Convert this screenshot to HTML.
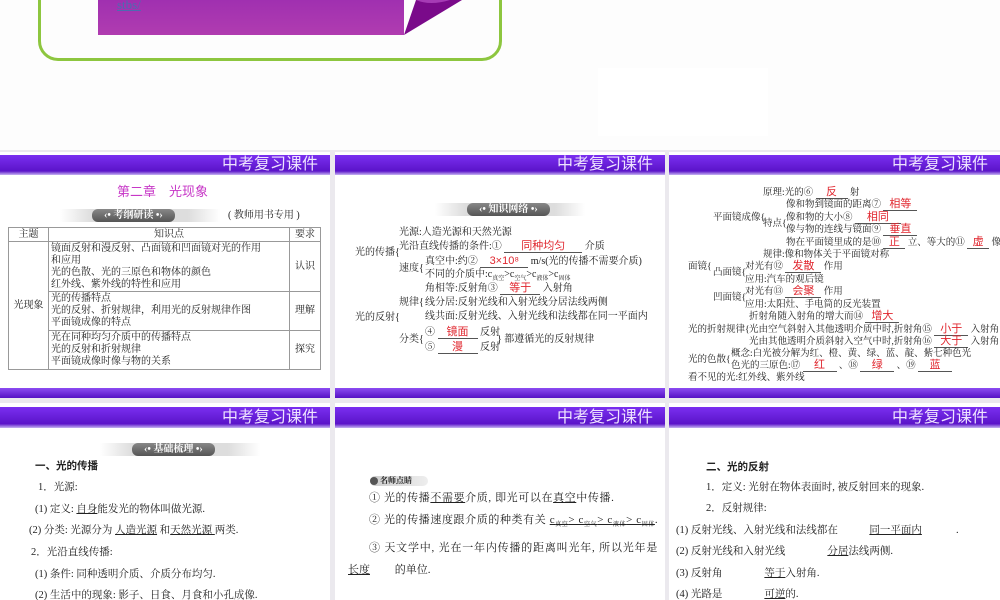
<!DOCTYPE html>
<html><head><meta charset="utf-8"><style>
*{margin:0;padding:0;box-sizing:border-box}
body{width:1000px;height:600px;overflow:hidden;background:#fdfdfd;position:relative;font-family:"Liberation Serif","Noto Serif CJK SC",serif;color:#222}
.a{position:absolute;white-space:nowrap}
.grid{position:absolute;left:0;top:150px;width:1000px;height:450px;background:#ebe9ee}
.tile{position:absolute;background:#fff;overflow:hidden}
.hd{position:absolute;left:0;right:0;top:3px;height:20px;background:linear-gradient(#7a2ff0,#5b14c9 80%,#c7b4f2);color:#efe4ff;font-family:"Liberation Sans","Noto Sans CJK SC",sans-serif;font-size:16px;text-align:right;padding-right:12px;line-height:20px}
.ft{position:absolute;left:0;right:0;bottom:0;height:10px;background:linear-gradient(#8c4cf2,#5512c4)}
.t{font-size:10px;line-height:12px}
.s{font-size:9.5px;line-height:12px}
.r{color:#e0262e;font-family:"Liberation Sans","Noto Sans CJK SC",sans-serif;font-size:11px}
.u{text-decoration:underline}
.ul{display:inline-block;border-bottom:1px solid #555;text-align:center;line-height:11px}
.lab{position:absolute;height:13px;background:linear-gradient(90deg,transparent,#ddd 20%,#ddd 80%,transparent)}
.pill{position:absolute;top:0;height:13px;background:linear-gradient(#888,#555);color:#fff;font-size:10px;line-height:13px;border-radius:6px;padding:0 12px;font-weight:bold}
table{border-collapse:collapse;font-size:10px;line-height:12px}
td{border:1px solid #999;vertical-align:middle;padding:0 2px}
</style></head><body>
<div class="a" style="left:38px;top:-20px;width:464px;height:81px;border:3px solid #8dc63f;border-radius:20px"></div>
<div class="a" style="left:98px;top:0;width:306px;height:35px;background:linear-gradient(#a030b0,#b03cb0)"></div>
<svg class="a" style="left:400px;top:0" width="65" height="36"><polygon points="4,35 16,0 62,0" fill="#7a0a8a"/><path d="M16,0 Q30,6 50,0Z" fill="#a63bb5"/></svg>
<div class="a" style="left:117px;top:-2px;font-size:13px;line-height:14px;color:#4d6bb0;text-decoration:underline">stbs/</div>
<div class="a" style="left:598px;top:68px;width:170px;height:68px;background:#fff"></div>

<div class="grid"></div>
<!-- tile 1 -->
<div class="tile" style="left:0;top:152px;width:330px;height:246px">
<div class="hd">中考复习课件</div><div class="ft"></div>
<div class="a" style="left:117px;top:29px;font-size:13px;color:#c737c7;font-family:'Liberation Sans','Noto Sans CJK SC',sans-serif">第二章　光现象</div>
<div class="lab" style="left:60px;top:57px;width:160px"><div class="pill" style="left:32px">‹• 考纲研读 •›</div></div>
<div class="a t" style="left:228px;top:58px">( 教师用书专用 )</div>
<table class="a" style="left:8px;top:75px;width:313px">
<tr style="height:14px"><td style="width:40px;text-align:center">主题</td><td style="text-align:center">知识点</td><td style="width:31px;text-align:center">要求</td></tr>
<tr style="height:50px"><td rowspan="3" style="text-align:center">光现象</td><td>镜面反射和漫反射、凸面镜和凹面镜对光的作用<br>和应用<br>光的色散、光的三原色和物体的颜色<br>红外线、紫外线的特性和应用</td><td style="text-align:center">认识</td></tr>
<tr style="height:39px"><td>光的传播特点<br>光的反射、折射规律，利用光的反射规律作图<br>平面镜成像的特点</td><td style="text-align:center">理解</td></tr>
<tr style="height:39px"><td>光在同种均匀介质中的传播特点<br>光的反射和折射规律<br>平面镜成像时像与物的关系</td><td style="text-align:center">探究</td></tr>
</table>
</div>
<!-- tile 2 -->
<div class="tile" style="left:335px;top:152px;width:330px;height:246px">
<div class="hd">中考复习课件</div><div class="ft"></div>
<div class="lab" style="left:100px;top:51px;width:150px"><div class="pill" style="left:32px">‹• 知识网络 •›</div></div>
<div class="a t" style="left:20px;top:95px">光的传播{</div>
<div class="a t" style="left:64px;top:75px">光源:人造光源和天然光源</div>
<div class="a t" style="left:64px;top:89px">光沿直线传播的条件:① <span class="ul r" style="width:78px">同种均匀</span> 介质</div>
<div class="a t" style="left:64px;top:111px">速度{</div>
<div class="a t" style="left:90px;top:104px">真空中:约② <span class="ul r" style="width:48px">3×10⁸</span> m/s(光的传播不需要介质)</div>
<div class="a t" style="left:90px;top:117px">不同的介质中:c<sub style="font-size:6px">真空</sub>&gt;c<sub style="font-size:6px">空气</sub>&gt;c<sub style="font-size:6px">液体</sub>&gt;c<sub style="font-size:6px">固体</sub></div>
<div class="a t" style="left:20px;top:160px">光的反射{</div>
<div class="a t" style="left:64px;top:145px">规律{</div>
<div class="a t" style="left:90px;top:131px">角相等:反射角③ <span class="ul r" style="width:40px">等于</span> 入射角</div>
<div class="a t" style="left:90px;top:145px">线分居:反射光线和入射光线分居法线两侧</div>
<div class="a t" style="left:90px;top:159px">线共面:反射光线、入射光线和法线都在同一平面内</div>
<div class="a t" style="left:64px;top:182px">分类{</div>
<div class="a t" style="left:90px;top:175px">④ <span class="ul r" style="width:40px">镜面</span> 反射</div>
<div class="a t" style="left:90px;top:190px">⑤ <span class="ul r" style="width:40px">漫</span> 反射</div>
<div class="a t" style="left:162px;top:182px">} 都遵循光的反射规律</div>
</div>
<!-- tile 3 -->
<div class="tile" style="left:669px;top:152px;width:331px;height:246px">
<div class="hd">中考复习课件</div><div class="ft"></div>
<div class="a s" style="left:19px;top:109px">面镜{</div>
<div class="a s" style="left:44px;top:60px">平面镜成像{</div>
<div class="a s" style="left:94px;top:35px">原理:光的⑥ <span class="ul r" style="width:32px">反</span> 射</div>
<div class="a s" style="left:94px;top:66px">特点{</div>
<div class="a s" style="left:117px;top:47px">像和物到镜面的距离⑦ <span class="ul r" style="width:34px">相等</span></div>
<div class="a s" style="left:117px;top:60px">像和物的大小⑧ <span class="ul r" style="width:46px">相同</span></div>
<div class="a s" style="left:117px;top:72px">像与物的连线与镜面⑨ <span class="ul r" style="width:34px">垂直</span></div>
<div class="a s" style="left:117px;top:85px">物在平面镜里成的是⑩ <span class="ul r" style="width:22px">正</span> 立、等大的⑪ <span class="ul r" style="width:22px">虚</span> 像</div>
<div class="a s" style="left:94px;top:97px">规律:像和物体关于平面镜对称</div>
<div class="a s" style="left:44px;top:115px">凸面镜{</div>
<div class="a s" style="left:76px;top:109px">对光有⑫ <span class="ul r" style="width:36px">发散</span> 作用</div>
<div class="a s" style="left:76px;top:122px">应用:汽车的观后镜</div>
<div class="a s" style="left:44px;top:140px">凹面镜{</div>
<div class="a s" style="left:76px;top:134px">对光有⑬ <span class="ul r" style="width:36px">会聚</span> 作用</div>
<div class="a s" style="left:76px;top:147px">应用:太阳灶、手电筒的反光装置</div>
<div class="a s" style="left:19px;top:172px">光的折射规律{</div>
<div class="a s" style="left:80px;top:159px">折射角随入射角的增大而⑭ <span class="ul r" style="width:34px">增大</span></div>
<div class="a s" style="left:80px;top:172px">光由空气斜射入其他透明介质中时,折射角⑮ <span class="ul r" style="width:34px">小于</span> 入射角</div>
<div class="a s" style="left:80px;top:184px">光由其他透明介质斜射入空气中时,折射角⑯ <span class="ul r" style="width:34px">大于</span> 入射角</div>
<div class="a s" style="left:19px;top:202px">光的色散{</div>
<div class="a s" style="left:62px;top:196px">概念:白光被分解为红、橙、黄、绿、蓝、靛、紫七种色光</div>
<div class="a s" style="left:62px;top:208px">色光的三原色:⑰ <span class="ul r" style="width:34px">红</span> 、⑱ <span class="ul r" style="width:34px">绿</span> 、⑲ <span class="ul r" style="width:34px">蓝</span></div>
<div class="a s" style="left:19px;top:220px">看不见的光:红外线、紫外线</div>
</div>
<!-- tile 4 -->
<div class="tile" style="left:0;top:403px;width:330px;height:197px">
<div class="hd" style="top:4px;height:21px;line-height:21px">中考复习课件</div>
<div class="lab" style="left:100px;top:40px;width:160px"><div class="pill" style="left:32px">‹• 基础梳理 •›</div></div>
<div class="a t" style="left:35px;top:57px;font-size:10.5px;font-weight:bold;font-family:'Liberation Sans','Noto Sans CJK SC',sans-serif">一、光的传播</div>
<div class="a t" style="left:38px;top:79px;font-size:10.5px">1．光源:</div>
<div class="a t" style="left:35px;top:101px;font-size:10.5px">(1) 定义: <span class="u">自身</span>能发光的物体叫做光源.</div>
<div class="a t" style="left:29px;top:122px;font-size:10.5px">(2) 分类: 光源分为 <span class="u">人造光源</span> 和<span class="u">天然光源 </span> 两类.</div>
<div class="a t" style="left:31px;top:144px;font-size:10.5px">2．光沿直线传播:</div>
<div class="a t" style="left:35px;top:166px;font-size:10.5px">(1) 条件: 同种透明介质、介质分布均匀.</div>
<div class="a t" style="left:35px;top:187px;font-size:10.5px">(2) 生活中的现象: 影子、日食、月食和小孔成像.</div>
</div>
<!-- tile 5 -->
<div class="tile" style="left:335px;top:403px;width:330px;height:197px">
<div class="hd" style="top:4px;height:21px;line-height:21px">中考复习课件</div>
<div class="a" style="left:35px;top:73px;width:58px;height:10px;background:linear-gradient(90deg,#ccc,#eee);border-radius:5px;font-size:8px;line-height:10px;padding-left:10px;font-weight:bold">名师点睛</div>
<div class="a" style="left:35px;top:74px;width:8px;height:8px;border-radius:50%;background:#555"></div>
<div class="a t" style="left:34px;top:89px;font-size:11px;letter-spacing:0.6px">① 光的传播<span class="u">不需要</span>介质, 即光可以在<span class="u">真空</span>中传播.</div>
<div class="a t" style="left:34px;top:111px;font-size:11px;letter-spacing:0.6px">② 光的传播速度跟介质的种类有关 <span class="u">c<sub style="font-size:6px">真空</sub>&gt; c<sub style="font-size:6px">空气</sub>&gt; c<sub style="font-size:6px">液体</sub>&gt; c<sub style="font-size:6px">固体</sub></span>.</div>
<div class="a t" style="left:34px;top:139px;font-size:11px;letter-spacing:0.8px">③ 天文学中, 光在一年内传播的距离叫光年, 所以光年是</div>
<div class="a t" style="left:13px;top:161px;font-size:11px"><span class="u">长度</span>　　 的单位.</div>
</div>
<!-- tile 6 -->
<div class="tile" style="left:669px;top:403px;width:331px;height:197px">
<div class="hd" style="top:4px;height:21px;line-height:21px">中考复习课件</div>
<div class="a t" style="left:37px;top:58px;font-size:10.5px;font-weight:bold;font-family:'Liberation Sans','Noto Sans CJK SC',sans-serif">二、光的反射</div>
<div class="a t" style="left:37px;top:79px;font-size:10.5px">1．定义: 光射在物体表面时, 被反射回来的现象.</div>
<div class="a t" style="left:37px;top:100px;font-size:10.5px">2．反射规律:</div>
<div class="a t" style="left:7px;top:122px;font-size:10.5px">(1) 反射光线、入射光线和法线都在　　　<span class="u">同一平面内</span>　　　 .</div>
<div class="a t" style="left:7px;top:143px;font-size:10.5px">(2) 反射光线和入射光线　　　　<span class="u">分居</span>法线两侧.</div>
<div class="a t" style="left:7px;top:165px;font-size:10.5px">(3) 反射角　　　　<span class="u">等于</span>入射角.</div>
<div class="a t" style="left:7px;top:186px;font-size:10.5px">(4) 光路是　　　　<span class="u">可逆</span>的.</div>
</div>
</body></html>
